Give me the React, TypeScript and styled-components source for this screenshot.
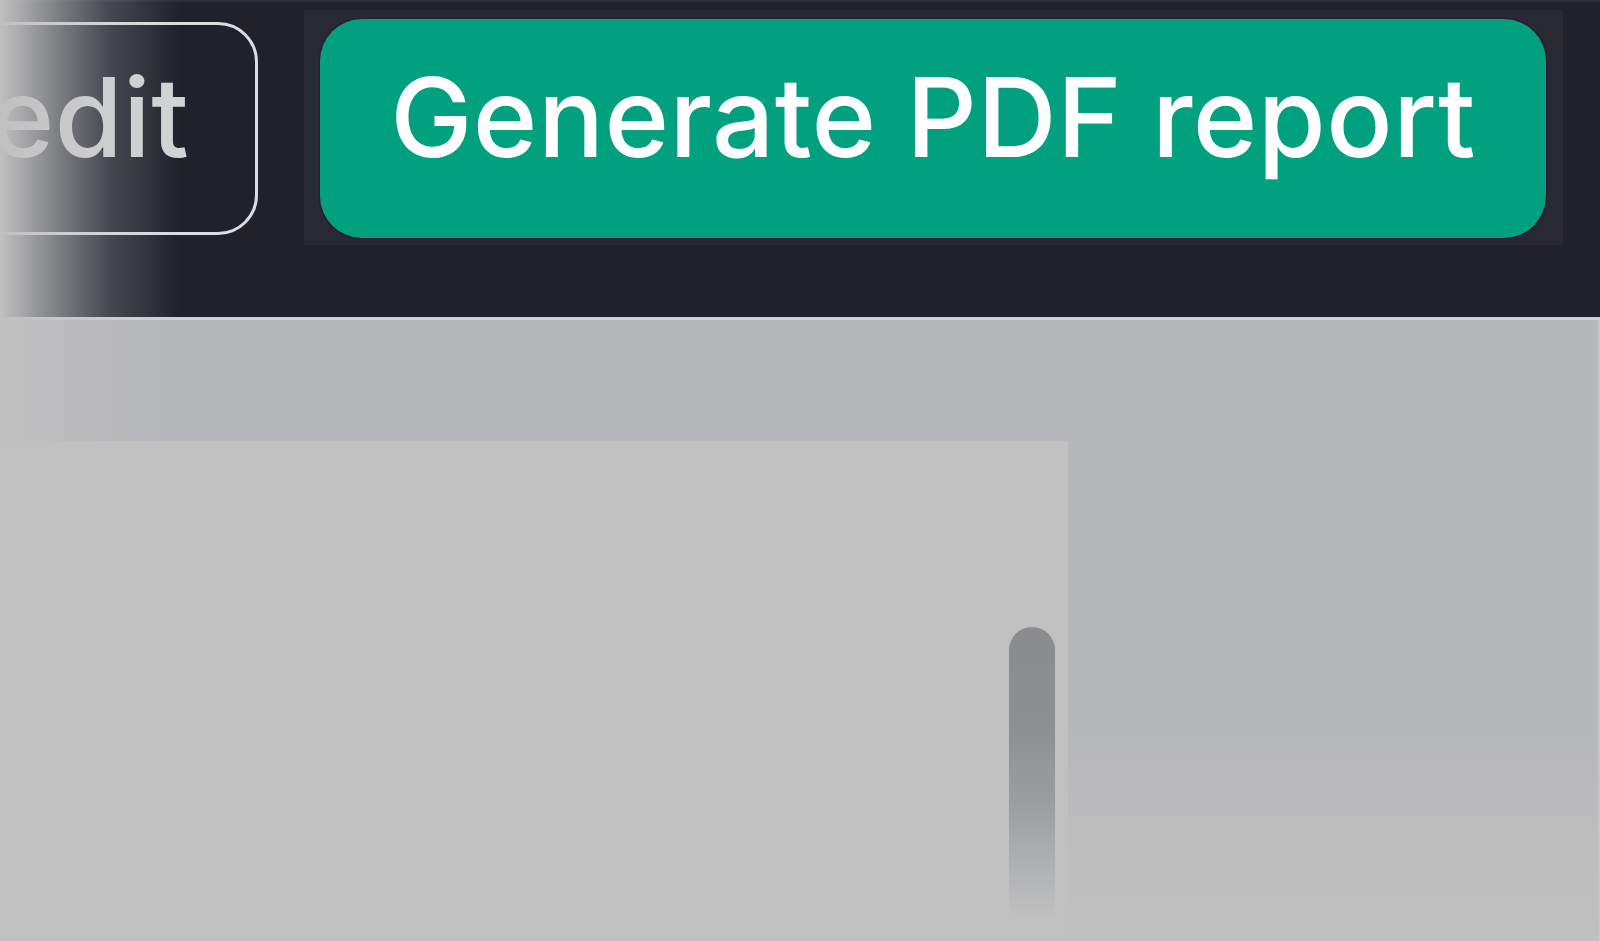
import React from "react";
import styled, { createGlobalStyle } from "styled-components";

const GlobalStyle = createGlobalStyle`
  html, body {
    margin: 0;
    padding: 0;
    height: 100%;
    background: #b6b7ba;
    overflow: hidden;
  }
  #root {
    height: 100%;
  }
`;

const Page = styled.div`
  position: relative;
  height: 941px;
  display: flex;
  flex-direction: column;
  font-family: Inter, "Noto Sans", sans-serif;
  overflow: hidden;
`;

const Toolbar = styled.header`
  height: 307px;
  flex-shrink: 0;
  background: #1f222b;
  border-top: 2px solid #2a2d35;
  border-bottom: 3px solid #d0d0d2;
  box-sizing: content-box;
  display: flex;
  justify-content: flex-end;
  align-items: flex-start;
  gap: 46px;
  padding: 8px 37px 0 0;
  overflow: hidden;
`;

const GhostButton = styled.button`
  flex-shrink: 0;
  margin-top: 12px;
  height: 213px;
  padding: 0 66px 24px 60px;
  border: 3px solid #dcdddf;
  border-radius: 40px;
  background: transparent;
  color: #d2d3d5;
  font-family: inherit;
  font-size: 110px;
  font-weight: 500;
  letter-spacing: 0.4px;
  line-height: 1;
`;

const ActionWell = styled.div`
  flex-shrink: 0;
  width: 1259px;
  height: 235px;
  box-sizing: border-box;
  padding: 9px 17px 7px 16px;
  background: #272a33;
  border-radius: 2px;
`;

const PrimaryButton = styled.button`
  width: 100%;
  height: 100%;
  border: none;
  border-radius: 42px;
  background: #01a07f;
  box-shadow: 0 0 0 1.5px rgba(60, 10, 45, 0.55);
  color: #ffffff;
  font-family: inherit;
  font-size: 110px;
  font-weight: 500;
  letter-spacing: 0.4px;
  line-height: 1;
  padding-bottom: 24px;
`;

const Workspace = styled.main`
  flex: 1;
  display: flex;
  flex-direction: column;
  padding-top: 121px;
  background: linear-gradient(
    to bottom,
    #b6b7ba 0,
    #b6b7ba 400px,
    #bdbdbe 520px,
    #c0c0c0 621px
  );
  border-right: 2px solid #c6c6c8;
`;

const Sheet = styled.section`
  position: relative;
  width: 1068px;
  flex: 1;
  background: #c0c0c0;
`;

const ScrollThumb = styled.div`
  position: absolute;
  left: 1009px;
  top: 186px;
  width: 46px;
  height: 292px;
  border-radius: 23px 23px 0 0;
  background: linear-gradient(
    to bottom,
    #8b8c90 0,
    #8e8f93 35%,
    #9c9da0 60%,
    #b3b4b7 85%,
    rgba(192, 192, 192, 0) 100%
  );
`;

const EdgeFade = styled.div`
  position: absolute;
  left: 0;
  top: 0;
  bottom: 0;
  width: 180px;
  pointer-events: none;
  background: linear-gradient(
    to right,
    rgba(192, 192, 193, 1) 0,
    rgba(192, 192, 193, 0.85) 12%,
    rgba(192, 192, 193, 0.55) 35%,
    rgba(192, 192, 193, 0.25) 60%,
    rgba(192, 192, 193, 0) 100%
  );
`;

export default function App() {
  return (
    <>
      <GlobalStyle />
      <Page>
        <Toolbar>
          <GhostButton>edit</GhostButton>
          <ActionWell>
            <PrimaryButton>Generate PDF report</PrimaryButton>
          </ActionWell>
        </Toolbar>
        <Workspace>
          <Sheet>
            <ScrollThumb />
          </Sheet>
        </Workspace>
        <EdgeFade />
      </Page>
    </>
  );
}
